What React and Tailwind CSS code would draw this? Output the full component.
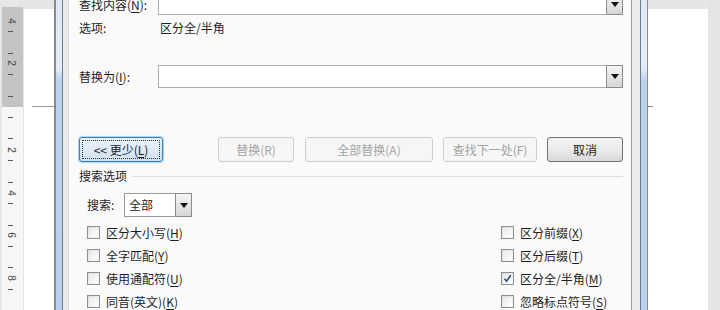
import React from "react";

const U = ({ c }) => <span className="underline underline-offset-[2px] decoration-[1px]">{c}</span>;

const Caret = () => (
  <svg width="8" height="5" viewBox="0 0 8 5"><path d="M0 0h8L4 5z" fill="#111" /></svg>
);

const DropBtn = ({ w = "w-[17px]" }) => (
  <div className={`${w} -my-px -mr-px self-stretch border border-[#8a8a8a] bg-gradient-to-b from-[#f5f5f5] to-[#d6d6d6] flex items-center justify-center rounded-[1px]`}>
    <Caret />
  </div>
);

const Ruler = () => {
  const ticks = [24, 46, 67, 89, 110, 131, 153, 175, 196, 218, 239, 260, 282];
  const nums = [["4", 14], ["2", 56], ["2", 143], ["4", 186], ["6", 228], ["8", 271]];
  return (
    <div className="relative w-[21px] h-full flex flex-col shrink-0">
      <div className="h-[100px] bg-[#c4c4c4]" />
      <div className="flex-1 bg-[#f6f6f6]" />
      {ticks.map((t) => (
        <div key={t} className="absolute left-[6px] w-[5px] h-px bg-[#555]" style={{ top: t }} />
      ))}
      {nums.map(([n, t], i) => (
        <div
          key={i}
          className="absolute left-[4px] w-[10px] h-[10px] flex items-center justify-center text-[10px] leading-none text-[#444] font-['Liberation_Sans',sans-serif] rotate-90"
          style={{ top: t - 5 }}
        >
          {n}
        </div>
      ))}
    </div>
  );
};

const Check = ({ checked, children }) => (
  <div className="flex items-center h-[23px]">
    <div className="w-[13px] h-[13px] border border-[#8f8f8f] bg-gradient-to-br from-[#dcdcdc] to-[#fbfbfb] p-[1px] flex items-center justify-center">
      <div className="w-full h-full bg-gradient-to-br from-[#e9e9e9] to-[#fdfdfd] flex items-center justify-center">
        {checked && (
          <svg width="9" height="9" viewBox="0 0 9 9">
            <path d="M1.5 4.8 L3.6 7.2 L7.8 1.2" stroke="#2b4a86" strokeWidth="1.6" fill="none" />
          </svg>
        )}
      </div>
    </div>
    <span className="ml-[6px] leading-none">{children}</span>
  </div>
);

const Btn = ({ w, children, disabled, primary }) => {
  if (primary)
    return (
      <div className={`${w} h-[25px] rounded-[3px] border border-[#3c7fb1] bg-gradient-to-b from-[#ecf4fb] to-[#cfe0ef] shadow-[0_0_1px_1px_#a9d1f2] p-[2px]`}>
        <div className="w-full h-full border border-dotted border-[#333] flex items-center justify-center leading-none">
          {children}
        </div>
      </div>
    );
  if (disabled)
    return (
      <div className={`${w} h-[25px] rounded-[3px] border border-[#cdcdcd] bg-[#f6f6f6] flex items-center justify-center text-[#a3a3a3] leading-none`}>
        {children}
      </div>
    );
  return (
    <div className={`${w} h-[25px] rounded-[3px] border border-[#707070] bg-gradient-to-b from-[#f3f3f3] via-[#ebebeb] to-[#d9d9d9] flex items-center justify-center leading-none`}>
      {children}
    </div>
  );
};

const blue = "bg-[linear-gradient(to_bottom,#dfe9f4_0%,#e3edf7_22%,#b9d3ee_26%,#b7d2ee_100%)]";

export default function App() {
  return (
    <div className="w-[720px] h-[310px] overflow-hidden flex bg-[#e5e5e5] font-['Noto_Sans_CJK_SC',sans-serif] text-[12px] text-[#1e1e1e]">
      {/* left document area */}
      <div className="w-[54px] h-full flex pt-[7px] pl-[2px] shrink-0 bg-[#e6e6e6]">
        <Ruler />
        <div className="ml-[1px] mt-[2px] flex-1 bg-white">
          <div className="mt-[97px] ml-[8px] h-px bg-[#9a9a9a]" />
        </div>
      </div>

      {/* left frame */}
      <div className="w-[2px] bg-[#8a8a8a] shrink-0" />
      <div className={`w-[6px] ${blue} shrink-0`} />
      <div className="w-px bg-[#6f7d8c] shrink-0" />
      <div className="w-[6px] bg-[#ebebeb] border-r border-[#d9d9d9] shrink-0" />

      {/* dialog body */}
      <div className="w-[562px] h-full bg-[#fafafa] shrink-0 pl-[10px] pr-[8px] flex flex-col">
        <div className="-mt-[6px] h-[21px] flex items-center shrink-0">
          <span className="w-[79px] leading-none">查找内容(<U c="N" />):</span>
          <div className="flex-1 h-full border border-[#adadad] bg-white flex">
            <div className="flex-1" />
            <DropBtn />
          </div>
        </div>
        <div className="h-[25px] flex items-center shrink-0">
          <span className="w-[81px] leading-none">选项:</span>
          <span className="leading-none">区分全/半角</span>
        </div>
        <div className="mt-[25px] h-[23px] flex items-center shrink-0">
          <span className="w-[79px] leading-none">替换为(<U c="I" />):</span>
          <div className="flex-1 h-full border border-[#adadad] bg-white flex">
            <div className="flex-1" />
            <DropBtn />
          </div>
        </div>

        <div className="mt-[49px] h-[25px] flex items-center shrink-0">
          <Btn w="w-[84px]" primary>
            &lt;&lt; 更少(<U c="L" />)
          </Btn>
          <div className="ml-[55px]">
            <Btn w="w-[76px]" disabled>替换(R)</Btn>
          </div>
          <div className="ml-[11px]">
            <Btn w="w-[128px]" disabled>全部替换(A)</Btn>
          </div>
          <div className="ml-[10px]">
            <Btn w="w-[94px]" disabled>查找下一处(F)</Btn>
          </div>
          <div className="ml-[10px]">
            <Btn w="w-[76px]">取消</Btn>
          </div>
        </div>

        <div className="mt-[6px] h-[16px] flex items-center shrink-0">
          <span className="leading-none">搜索选项</span>
          <div className="ml-[5px] flex-1 h-px bg-[#dedede]" />
        </div>

        <div className="mt-[9px] h-[24px] flex items-center pl-[8px] shrink-0">
          <span className="w-[37px] leading-none">搜索:</span>
          <div className="w-[68px] h-full border border-[#9a9a9a] bg-white flex items-center">
            <span className="flex-1 pl-[4px] leading-none">全部</span>
            <DropBtn />
          </div>
        </div>

        <div className="mt-[4px] pl-[8px] grid grid-cols-[414px_1fr] shrink-0">
          <Check>区分大小写(<U c="H" />)</Check>
          <Check>区分前缀(<U c="X" />)</Check>
          <Check>全字匹配(<U c="Y" />)</Check>
          <Check>区分后缀(<U c="T" />)</Check>
          <Check>使用通配符(<U c="U" />)</Check>
          <Check checked>区分全/半角(<U c="M" />)</Check>
          <Check>同音(英文)(<U c="K" />)</Check>
          <Check>忽略标点符号(<U c="S" />)</Check>
        </div>
      </div>

      {/* right frame */}
      <div className="w-px bg-[#9c9c9c] shrink-0" />
      <div className="w-[8px] bg-[#ececec] shrink-0" />
      <div className="w-px bg-[#6f7d8c] shrink-0" />
      <div className={`w-[6px] ${blue} shrink-0`} />
      <div className="w-px bg-[#8a8a8a] shrink-0" />

      {/* right document area */}
      <div className="w-[60px] h-full pt-[9px] bg-[#e6e6e6] shrink-0">
        <div className="h-full bg-white">
          <div className="pt-[97px]">
            <div className="w-[5px] h-px bg-[#8a8a8a]" />
          </div>
        </div>
      </div>
      <div className="flex-1 bg-[#e4e4e4]" />
    </div>
  );
}
